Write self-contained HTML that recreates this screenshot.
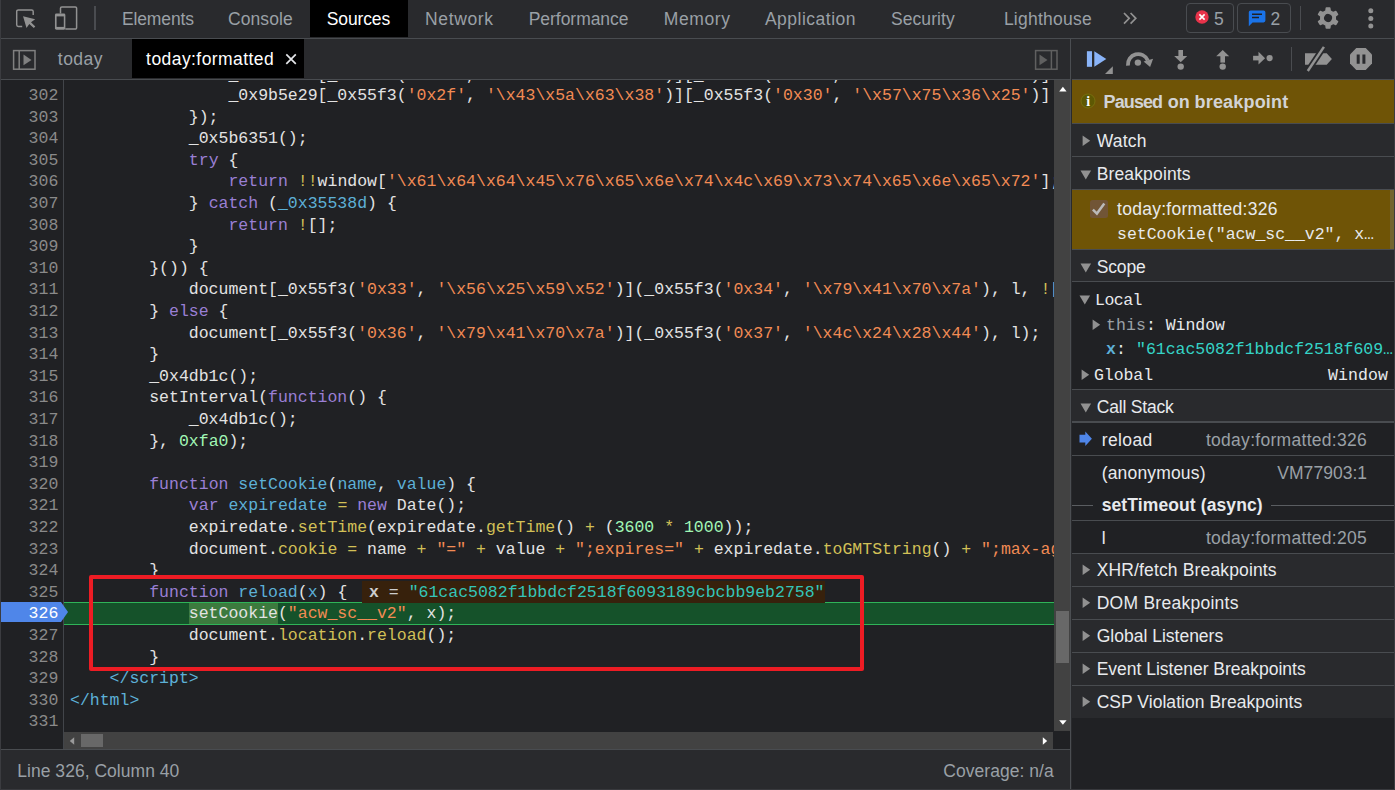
<!DOCTYPE html>
<html>
<head>
<meta charset="utf-8">
<title>DevTools - Sources</title>
<style>
*{box-sizing:border-box;margin:0;padding:0}
html,body{width:1395px;height:790px;overflow:hidden;background:#202124}
body{position:relative;font-family:"Liberation Sans",sans-serif;font-size:17.5px;color:#9aa0a6}
.abs{position:absolute;display:block}
.t{position:absolute;white-space:pre;line-height:22px;height:22px}
.ln{position:absolute;left:0;width:58.3px;text-align:right;font-family:"Liberation Mono",monospace;font-size:16.5px;line-height:21.6px;height:21.6px;color:#8a8a8a;white-space:pre;margin-top:0.8px}
.cl{position:absolute;left:6px;margin-top:0.8px;white-space:pre;font-family:"Liberation Mono",monospace;font-size:16.5px;line-height:21.6px;height:21.6px;color:#e3e3e3}
.k{color:#9a7fd5}.d{color:#5db0d7}.s{color:#f28b54}.n{color:#a1f7b5}.p{color:#d2c057}.g{color:#5db0d7}
</style>
</head>
<body>
<div class="abs" style="left:0px;top:0px;width:1395px;height:38px;background:#292a2d;"></div>
<div class="abs" style="left:0px;top:38px;width:1395px;height:1px;background:#494c50;"></div>
<div class="abs" style="left:310px;top:0px;width:98px;height:37px;background:#000;"></div>
<div class="t" style="left:121.90px;top:7.54px;font-size:17.50px;letter-spacing:-0.106px;color:#9aa0a6;font-weight:400;font-family:'Liberation Sans',sans-serif;">Elements</div>
<div class="t" style="left:228.00px;top:7.54px;font-size:17.50px;letter-spacing:0.070px;color:#9aa0a6;font-weight:400;font-family:'Liberation Sans',sans-serif;">Console</div>
<div class="t" style="left:326.80px;top:7.54px;font-size:17.50px;letter-spacing:-0.143px;color:#ffffff;font-weight:400;font-family:'Liberation Sans',sans-serif;">Sources</div>
<div class="t" style="left:425.10px;top:7.54px;font-size:17.50px;letter-spacing:0.603px;color:#9aa0a6;font-weight:400;font-family:'Liberation Sans',sans-serif;">Network</div>
<div class="t" style="left:528.70px;top:7.54px;font-size:17.50px;letter-spacing:-0.035px;color:#9aa0a6;font-weight:400;font-family:'Liberation Sans',sans-serif;">Performance</div>
<div class="t" style="left:663.70px;top:7.54px;font-size:17.50px;letter-spacing:0.617px;color:#9aa0a6;font-weight:400;font-family:'Liberation Sans',sans-serif;">Memory</div>
<div class="t" style="left:764.90px;top:7.54px;font-size:17.50px;letter-spacing:0.508px;color:#9aa0a6;font-weight:400;font-family:'Liberation Sans',sans-serif;">Application</div>
<div class="t" style="left:891.00px;top:7.54px;font-size:17.50px;letter-spacing:0.061px;color:#9aa0a6;font-weight:400;font-family:'Liberation Sans',sans-serif;">Security</div>
<div class="t" style="left:1003.90px;top:7.54px;font-size:17.50px;letter-spacing:0.237px;color:#9aa0a6;font-weight:400;font-family:'Liberation Sans',sans-serif;">Lighthouse</div>
<svg class="abs" style="left:14px;top:6px" width="26" height="26" viewBox="0 0 26 26"><path d="M8.2 20.4H4.3a1.6 1.6 0 0 1-1.6-1.6V5.5a1.6 1.6 0 0 1 1.6-1.6h13.3a1.6 1.6 0 0 1 1.6 1.6V9" fill="none" stroke="#929292" stroke-width="1.45"/><path d="M9.05 10.35L21.2 13.3 17 16.2l4.3 4.2-1.5 1.7-4.5-4-2.8 4z" fill="#929292"/></svg>
<svg class="abs" style="left:53px;top:5px" width="26" height="28" viewBox="0 0 26 28"><path d="M7.5 8.6V3.2a1.3 1.3 0 0 1 1.3-1.3h13.5a1.3 1.3 0 0 1 1.3 1.3v19.5a1.3 1.3 0 0 1-1.3 1.3H12.3" fill="none" stroke="#929292" stroke-width="1.5"/><rect x="1.95" y="8.6" width="10.4" height="16.15" rx="1.4" fill="#929292"/><rect x="3.6" y="11.4" width="7.2" height="10.5" fill="#292a2d"/></svg>
<div class="abs" style="left:94.2px;top:6px;width:1.8px;height:24px;background:#4a4c50;"></div>
<svg class="abs" style="left:1121px;top:10px" width="18" height="16" viewBox="0 0 18 16"><path d="M3 3l5.2 5.3L3 13.6M9.6 3l5.2 5.3-5.2 5.3" fill="none" stroke="#929292" stroke-width="1.7"/></svg>
<div class="abs" style="left:1186px;top:3px;width:48px;height:30px;background:transparent;border:1px solid #494c50;border-radius:4px"></div>
<svg class="abs" style="left:1195px;top:10.4px" width="14" height="14" viewBox="0 0 14 14"><circle cx="7" cy="7" r="6.7" fill="#e8334a"/><path d="M4.4 4.4l5.2 5.2M9.6 4.4l-5.2 5.2" stroke="#fff" stroke-width="1.6"/></svg>
<div class="t" style="left:1214.10px;top:7.54px;font-size:17.50px;letter-spacing:0.467px;color:#9aa0a6;font-weight:400;font-family:'Liberation Sans',sans-serif;">5</div>
<div class="abs" style="left:1237px;top:3px;width:54px;height:30px;background:transparent;border:1px solid #494c50;border-radius:4px"></div>
<svg class="abs" style="left:1248px;top:10px" width="18" height="17" viewBox="0 0 18 17"><path d="M2.6 0.4h13a1.8 1.8 0 0 1 1.8 1.8v8.4a1.8 1.8 0 0 1-1.8 1.8H4.6L0.8 16.2V2.2A1.8 1.8 0 0 1 2.6 0.4z" fill="#1a73e8"/><path d="M4 4.2h10M4 7.6h7" stroke="#202124" stroke-width="1.5"/></svg>
<div class="t" style="left:1270.60px;top:7.54px;font-size:17.50px;letter-spacing:-0.133px;color:#9aa0a6;font-weight:400;font-family:'Liberation Sans',sans-serif;">2</div>
<div class="abs" style="left:1300px;top:6px;width:1px;height:24px;background:#4a4c50;"></div>
<svg class="abs" style="left:1316px;top:5.8px" width="24" height="24" viewBox="0 0 24 24"><g transform="translate(12.05,12) rotate(30)"><path fill="#929292" fill-rule="evenodd" stroke="#929292" stroke-width="1.6" stroke-linejoin="round" d="M7.11 -2.06 L9.96 -1.68 L9.96 1.68 L7.11 2.06 L5.34 5.12 L6.44 7.78 L3.52 9.47 L1.77 7.19 L-1.77 7.19 L-3.52 9.47 L-6.44 7.78 L-5.34 5.12 L-7.11 2.06 L-9.96 1.68 L-9.96 -1.68 L-7.11 -2.06 L-5.34 -5.12 L-6.44 -7.78 L-3.52 -9.47 L-1.77 -7.19 L1.77 -7.19 L3.52 -9.47 L6.44 -7.78 L5.34 -5.12Z M4.80 0 A4.80 4.80 0 1 0 -4.80 0 A4.80 4.80 0 1 0 4.80 0Z"/></g></svg>
<svg class="abs" style="left:1366px;top:6.3px" width="10" height="24" viewBox="0 0 10 24"><circle cx="4.8" cy="4.8" r="2.5" fill="#929292"/><circle cx="4.8" cy="12.4" r="2.5" fill="#929292"/><circle cx="4.8" cy="20.1" r="2.5" fill="#929292"/></svg>
<div class="abs" style="left:0px;top:39px;width:1070px;height:40px;background:#292a2d;"></div>
<div class="abs" style="left:1071px;top:39px;width:324px;height:40px;background:#292a2d;"></div>
<div class="abs" style="left:0px;top:79px;width:1395px;height:1px;background:#494c50;"></div>
<div class="abs" style="left:132px;top:39px;width:172px;height:39px;background:#000;"></div>
<svg class="abs" style="left:12px;top:49px" width="25" height="22" viewBox="0 0 25 22"><rect x="1.6" y="1.6" width="21.4" height="18.6" fill="none" stroke="#808080" stroke-width="1.5"/><path d="M7.2 1.6v18.6" stroke="#808080" stroke-width="1.5"/><path d="M11.5 5.6l8 5.3-8 5.3z" fill="#808080"/></svg>
<div class="t" style="left:57.80px;top:48.34px;font-size:17.50px;letter-spacing:0.478px;color:#9aa0a6;font-weight:400;font-family:'Liberation Sans',sans-serif;">today</div>
<div class="t" style="left:146.10px;top:48.34px;font-size:17.50px;letter-spacing:0.434px;color:#ffffff;font-weight:400;font-family:'Liberation Sans',sans-serif;">today:formatted</div>
<svg class="abs" style="left:285px;top:53px" width="12" height="12" viewBox="0 0 12 12"><path d="M1.3 1.3l9.5 9.5M10.8 1.3l-9.5 9.5" stroke="#e4e6e9" stroke-width="1.7"/></svg>
<svg class="abs" style="left:1034px;top:49px" width="25" height="22" viewBox="0 0 25 22"><rect x="1.6" y="1.6" width="21.4" height="18.6" fill="none" stroke="#606060" stroke-width="1.5"/><path d="M17.4 1.6v18.6" stroke="#606060" stroke-width="1.5"/><path d="M5.5 5.6l8 5.3-8 5.3z" fill="#606060"/></svg>
<svg class="abs" style="left:1084px;top:46px" width="32" height="30" viewBox="0 0 32 30"><rect x="2.9" y="5.2" width="5.1" height="15.6" fill="#8ab4f8"/><path d="M10.3 5.2l12 7.8-12 7.8z" fill="#8ab4f8"/><path d="M28.8 20.3v7.7h-7.8z" fill="#929292"/></svg>
<svg class="abs" style="left:1124px;top:48px" width="32" height="24" viewBox="0 0 32 24"><path d="M3.9 17.6a10.4 10.4 0 0 1 19.9 -5.2" fill="none" stroke="#929292" stroke-width="3.8"/><path d="M19.6 13.6l9.5-2.9-3 8.3z" fill="#929292"/><circle cx="13.9" cy="14.6" r="3.2" fill="#929292"/></svg>
<svg class="abs" style="left:1170px;top:46px" width="22" height="26" viewBox="0 0 22 26"><rect x="8.4" y="4" width="4.6" height="7" fill="#929292"/><path d="M4.2 10h13l-6.5 6.3z" fill="#929292"/><circle cx="10.7" cy="20.6" r="3.2" fill="#929292"/></svg>
<svg class="abs" style="left:1212px;top:46px" width="22" height="26" viewBox="0 0 22 26"><rect x="8.4" y="10" width="4.6" height="6.6" fill="#929292"/><path d="M4.2 10.2h13l-6.5-6.2z" fill="#929292"/><circle cx="10.7" cy="20.6" r="3.2" fill="#929292"/></svg>
<svg class="abs" style="left:1250px;top:48px" width="26" height="22" viewBox="0 0 26 22"><rect x="3.1" y="7.8" width="6.6" height="4.6" fill="#929292"/><path d="M8.5 3.8v12.8l6.6-6.4z" fill="#929292"/><circle cx="19.6" cy="10.1" r="3.1" fill="#929292"/></svg>
<div class="abs" style="left:1291px;top:47px;width:1px;height:24px;background:#4a4c50;"></div>
<svg class="abs" style="left:1302px;top:45px" width="32" height="28" viewBox="0 0 32 28"><path d="M3 8.2h21.7l5.2 5.7-5.2 5.8H3z" fill="#929292"/><path d="M22.6 0.8L5.2 27" stroke="#292a2d" stroke-width="6"/><path d="M21.9 1.9L5.8 26" stroke="#929292" stroke-width="2.5"/></svg>
<svg class="abs" style="left:1349px;top:47px" width="24" height="24" viewBox="0 0 24 24"><path d="M7.3 1h9.4l6.3 6.4v9.2l-6.3 6.4H7.3L1 16.6V7.4z" fill="#929292"/><path d="M9.2 7.4v9.4M14.9 7.4v9.4" stroke="#292a2d" stroke-width="3"/></svg>
<div class="abs" style="left:1070px;top:39px;width:1px;height:751px;background:#4b4e52;"></div>
<div class="abs" style="left:1071px;top:39px;width:1px;height:751px;background:#292a2d;"></div>
<div class="abs" style="left:0;top:80px;width:63px;height:669px;background:#202124"></div>
<div class="abs" style="left:63px;top:80px;width:1px;height:669px;background:#42454a;"></div>
<div class="abs" id="code" style="left:64px;top:80px;width:990px;height:652px;overflow:hidden;background:#202124">
<div class="abs" style="left:0;top:522.00px;width:990px;height:23px;background:#15522a;border-top:1px solid #2fb458;border-bottom:1px solid #2fb458"></div>
<div class="abs" style="left:124.80px;top:523.00px;width:89.10px;height:21.00px;background:#3c7a3e"></div>
<div class="abs" style="left:298.00px;top:501.00px;width:463.00px;height:22.00px;background:#37210c"></div>
<div class="cl" style="top:-15.80px">                _0x9b5e29[_0x55f3(<span class="s">'0x2d'</span>, <span class="s">'\x6a\x5d\x5b\x28'</span>)][_0x55f3(<span class="s">'0x2e'</span>, <span class="s">'\x5b\x4a\x79\x28'</span>)] </div>
<div class="cl" style="top:4.20px">                _0x9b5e29[_0x55f3(<span class="s">'0x2f'</span>, <span class="s">'\x43\x5a\x63\x38'</span>)][_0x55f3(<span class="s">'0x30'</span>, <span class="s">'\x57\x75\x36\x25'</span>)] <span class="p">= </span>_0x9b5e29</div>
<div class="cl" style="top:25.80px">            });</div>
<div class="cl" style="top:47.40px">            _0x5b6351();</div>
<div class="cl" style="top:69.00px">            <span class="k">try</span> {</div>
<div class="cl" style="top:90.60px">                <span class="k">return</span> <span class="p">!!</span>window[<span class="s">'\x61\x64\x64\x45\x76\x65\x6e\x74\x4c\x69\x73\x74\x65\x6e\x65\x72'</span>];</div>
<div class="cl" style="top:112.20px">            } <span class="k">catch</span> (<span class="d">_0x35538d</span>) {</div>
<div class="cl" style="top:133.80px">                <span class="k">return</span> <span class="p">!</span>[];</div>
<div class="cl" style="top:155.40px">            }</div>
<div class="cl" style="top:177.00px">        }()) {</div>
<div class="cl" style="top:198.60px">            document[_0x55f3(<span class="s">'0x33'</span>, <span class="s">'\x56\x25\x59\x52'</span>)](_0x55f3(<span class="s">'0x34'</span>, <span class="s">'\x79\x41\x70\x7a'</span>), l, <span class="p">!</span>[]);</div>
<div class="cl" style="top:220.20px">        } <span class="k">else</span> {</div>
<div class="cl" style="top:241.80px">            document[_0x55f3(<span class="s">'0x36'</span>, <span class="s">'\x79\x41\x70\x7a'</span>)](_0x55f3(<span class="s">'0x37'</span>, <span class="s">'\x4c\x24\x28\x44'</span>), l);</div>
<div class="cl" style="top:263.40px">        }</div>
<div class="cl" style="top:285.00px">        _0x4db1c();</div>
<div class="cl" style="top:306.60px">        setInterval(<span class="k">function</span>() {</div>
<div class="cl" style="top:328.20px">            _0x4db1c();</div>
<div class="cl" style="top:349.80px">        }, <span class="n">0xfa0</span>);</div>
<div class="cl" style="top:371.40px"></div>
<div class="cl" style="top:393.00px">        <span class="k">function</span> <span class="d">setCookie</span>(<span class="d">name</span>, <span class="d">value</span>) {</div>
<div class="cl" style="top:414.60px">            <span class="k">var</span> <span class="d">expiredate</span> <span class="p">=</span> <span class="k">new</span> Date();</div>
<div class="cl" style="top:436.20px">            expiredate.<span class="p">setTime</span>(expiredate.<span class="p">getTime</span>() <span class="p">+</span> (<span class="n">3600</span> <span class="p">*</span> <span class="n">1000</span>));</div>
<div class="cl" style="top:457.80px">            document.<span class="p">cookie</span> <span class="p">=</span> name <span class="p">+</span> <span class="s">"="</span> <span class="p">+</span> value <span class="p">+</span> <span class="s">";expires="</span> <span class="p">+</span> expiredate.<span class="p">toGMTString</span>() <span class="p">+</span> <span class="s">";max-age=3600;path=/"</span>;</div>
<div class="cl" style="top:479.40px">        }</div>
<div class="cl" style="top:501.00px">        <span class="k">function</span> <span class="d">reload</span>(<span class="d">x</span>) {</div>
<div class="cl" style="top:522.60px">            setCookie(<span class="s">"acw_sc__v2"</span>, x);</div>
<div class="cl" style="top:544.20px">            document.<span class="p">location</span>.<span class="p">reload</span>();</div>
<div class="cl" style="top:565.80px">        }</div>
<div class="cl" style="top:587.40px"><span class="g">    &lt;/script&gt;</span></div>
<div class="cl" style="top:609.00px"><span class="g">&lt;/html&gt;</span></div>
<div class="cl" style="top:630.60px"></div>
<div class="cl" style="top:501.00px;left:305.00px"><span style="color:#cdcdcd"><b>x</b> = </span><span style="color:#34c5b9">"61cac5082f1bbdcf2518f6093189cbcbb9eb2758"</span></div>
</div>
<div class="abs" style="left:0;top:80px;width:70px;height:669px;overflow:hidden">
<svg class="abs" style="left:0;top:522.20px" width="70" height="20" viewBox="0 0 70 20"><path d="M1 0h60l7 10-7 10H1z" fill="#4f86e9"/></svg>
<div class="ln" style="top:-17.40px">301</div>
<div class="ln" style="top:4.20px">302</div>
<div class="ln" style="top:25.80px">303</div>
<div class="ln" style="top:47.40px">304</div>
<div class="ln" style="top:69.00px">305</div>
<div class="ln" style="top:90.60px">306</div>
<div class="ln" style="top:112.20px">307</div>
<div class="ln" style="top:133.80px">308</div>
<div class="ln" style="top:155.40px">309</div>
<div class="ln" style="top:177.00px">310</div>
<div class="ln" style="top:198.60px">311</div>
<div class="ln" style="top:220.20px">312</div>
<div class="ln" style="top:241.80px">313</div>
<div class="ln" style="top:263.40px">314</div>
<div class="ln" style="top:285.00px">315</div>
<div class="ln" style="top:306.60px">316</div>
<div class="ln" style="top:328.20px">317</div>
<div class="ln" style="top:349.80px">318</div>
<div class="ln" style="top:371.40px">319</div>
<div class="ln" style="top:393.00px">320</div>
<div class="ln" style="top:414.60px">321</div>
<div class="ln" style="top:436.20px">322</div>
<div class="ln" style="top:457.80px">323</div>
<div class="ln" style="top:479.40px">324</div>
<div class="ln" style="top:501.00px">325</div>
<div class="ln" style="top:522.60px;color:#fff">326</div>
<div class="ln" style="top:544.20px">327</div>
<div class="ln" style="top:565.80px">328</div>
<div class="ln" style="top:587.40px">329</div>
<div class="ln" style="top:609.00px">330</div>
<div class="ln" style="top:630.60px">331</div>
</div>
<div class="abs" style="left:89px;top:575px;width:775.3px;height:96.4px;border:4.2px solid #ed1c24;border-radius:2px"></div>
<div class="abs" style="left:1054px;top:80px;width:16px;height:651px;background:#424242;"></div>
<div class="abs" style="left:1056px;top:611px;width:13px;height:52px;background:#686868;"></div>
<svg class="abs" style="left:1057.6px;top:85.8px" width="10" height="8" viewBox="0 0 10 8"><path d="M1.2 5.4l3.7-4.6 3.7 4.6z" fill="#fff"/></svg>
<svg class="abs" style="left:1057.6px;top:718.8px" width="10" height="8" viewBox="0 0 10 8"><path d="M1.2 1.2l3.7 4.6 3.7-4.6z" fill="#fff"/></svg>
<div class="abs" style="left:64px;top:732px;width:989px;height:17px;background:#424242;"></div>
<div class="abs" style="left:1053px;top:731px;width:17px;height:18px;background:#202124;"></div>
<div class="abs" style="left:81px;top:734px;width:22px;height:13px;background:#686868;"></div>
<svg class="abs" style="left:68px;top:735.5px" width="8" height="10" viewBox="0 0 8 10"><path d="M6.2 1.2l-4.4 3.8 4.4 3.8z" fill="#9a9a9a"/></svg>
<svg class="abs" style="left:1041px;top:735.5px" width="8" height="10" viewBox="0 0 8 10"><path d="M1.8 1.2l4.4 3.8-4.4 3.8z" fill="#fff"/></svg>
<div class="abs" style="left:0px;top:732px;width:63px;height:17px;background:#202124;"></div>
<div class="abs" style="left:0px;top:749px;width:1070px;height:1px;background:#494c50;"></div>
<div class="abs" style="left:0px;top:750px;width:1070px;height:40px;background:#292a2d;"></div>
<div class="t" style="left:17.30px;top:759.54px;font-size:17.50px;letter-spacing:0.026px;color:#9aa0a6;font-weight:400;font-family:'Liberation Sans',sans-serif;">Line 326, Column 40</div>
<div class="t" style="left:943.30px;top:759.54px;font-size:17.50px;letter-spacing:0.036px;color:#9aa0a6;font-weight:400;font-family:'Liberation Sans',sans-serif;">Coverage: n/a</div>
<div class="abs" style="left:1072px;top:80px;width:323px;height:710px;background:#202124;"></div>
<div class="abs" style="left:1072px;top:80px;width:323px;height:43px;background:#6f5406;"></div>
<div class="abs" style="left:1072px;top:123px;width:323px;height:1px;background:#494c50;"></div>
<svg class="abs" style="left:1080.2px;top:93.1px" width="16" height="16" viewBox="0 0 16 16"><circle cx="8" cy="8" r="7" fill="#5e5803" stroke="#787010" stroke-width="0.9"/><text x="8.1" y="13" font-family="Liberation Serif,serif" font-weight="700" font-size="14" fill="#fff" text-anchor="middle">i</text></svg>
<div class="t" style="left:1103.58px;top:91.16px;font-size:18.00px;letter-spacing:-0.898px;color:#d2d3d5;font-weight:700;font-family:'Liberation Sans',sans-serif;">Paused</div>
<div class="t" style="left:1167.68px;top:91.16px;font-size:18.00px;letter-spacing:0.025px;color:#d2d3d5;font-weight:700;font-family:'Liberation Sans',sans-serif;">on</div>
<div class="t" style="left:1194.58px;top:91.16px;font-size:18.00px;letter-spacing:0.173px;color:#d2d3d5;font-weight:700;font-family:'Liberation Sans',sans-serif;">breakpoint</div>
<div class="abs" style="left:1072px;top:124px;width:323px;height:32px;background:#292a2d;"></div>
<div class="abs" style="left:1072px;top:156px;width:323px;height:1px;background:#494c50;"></div>
<svg class="abs" style="left:1082px;top:135.1px" width="9" height="12" viewBox="0 0 9 12"><path d="M0.6 0.6l7.6 5.2-7.6 5.2z" fill="#919191"/></svg>
<div class="t" style="left:1096.70px;top:129.94px;font-size:17.50px;letter-spacing:0.211px;color:#e8eaed;font-weight:400;font-family:'Liberation Sans',sans-serif;">Watch</div>
<div class="abs" style="left:1072px;top:157px;width:323px;height:31.5px;background:#292a2d;"></div>
<div class="abs" style="left:1072px;top:188.5px;width:323px;height:1.2px;background:#494c50;"></div>
<svg class="abs" style="left:1079.9px;top:169.8px" width="12" height="10" viewBox="0 0 12 10"><path d="M0.5 0.5h10.6l-5.3 9z" fill="#919191"/></svg>
<div class="t" style="left:1096.70px;top:162.74px;font-size:17.50px;letter-spacing:0.144px;color:#e8eaed;font-weight:400;font-family:'Liberation Sans',sans-serif;">Breakpoints</div>
<div class="abs" style="left:1072px;top:189.7px;width:323px;height:59.3px;background:#6f5406;"></div>
<div class="abs" style="left:1390px;top:189.7px;width:4px;height:59.3px;background:#73652f;"></div>
<div class="abs" style="left:1090px;top:200px;width:18px;height:18px;background:#715536;border-radius:2.5px"></div>
<svg class="abs" style="left:1090px;top:200px" width="18" height="18" viewBox="0 0 18 18"><path d="M2.9 9.6l4 4 7.4-10.1" fill="none" stroke="#bababa" stroke-width="2.5"/></svg>
<div class="t" style="left:1117.10px;top:198.34px;font-size:17.50px;letter-spacing:0.260px;color:#e8eaed;font-weight:400;font-family:'Liberation Sans',sans-serif;">today:formatted:326</div>
<div class="t" style="left:1117.00px;top:223.60px;font-size:16.50px;letter-spacing:-0.017px;color:#e8eaed;font-weight:400;font-family:'Liberation Mono',monospace;">setCookie(&quot;acw_sc__v2&quot;, x…</div>
<div class="abs" style="left:1072px;top:249px;width:323px;height:1px;background:#494c50;"></div>
<div class="abs" style="left:1072px;top:250px;width:323px;height:31px;background:#292a2d;"></div>
<div class="abs" style="left:1072px;top:281px;width:323px;height:1px;background:#494c50;"></div>
<svg class="abs" style="left:1079.9px;top:262.8px" width="12" height="10" viewBox="0 0 12 10"><path d="M0.5 0.5h10.6l-5.3 9z" fill="#919191"/></svg>
<div class="t" style="left:1096.70px;top:255.74px;font-size:17.50px;letter-spacing:-0.124px;color:#e8eaed;font-weight:400;font-family:'Liberation Sans',sans-serif;">Scope</div>
<svg class="abs" style="left:1078.5px;top:295px" width="12" height="10" viewBox="0 0 12 10"><path d="M0.5 0.5h10.6l-5.3 9z" fill="#919191"/></svg>
<div class="t" style="left:1095.00px;top:289.80px;font-size:16.50px;letter-spacing:-0.502px;color:#e8eaed;font-weight:400;font-family:'Liberation Mono',monospace;">Local</div>
<svg class="abs" style="left:1092.3px;top:319px" width="9" height="12" viewBox="0 0 9 12"><path d="M0.6 0.6l7.6 5.2-7.6 5.2z" fill="#919191"/></svg>
<div class="t" style="left:1106.00px;top:315.10px;font-size:16.50px;letter-spacing:0.098px;color:#9aa0a6;font-weight:400;font-family:'Liberation Mono',monospace;">this</div>
<div class="t" style="left:1146.00px;top:315.10px;font-size:16.50px;letter-spacing:-0.027px;color:#e8eaed;font-weight:400;font-family:'Liberation Mono',monospace;">: Window</div>
<div class="t" style="left:1106.00px;top:339.10px;font-size:16.50px;letter-spacing:0.098px;color:#5db0d7;font-weight:700;font-family:'Liberation Mono',monospace;">x</div>
<div class="t" style="left:1116.00px;top:339.10px;font-size:16.50px;letter-spacing:0.098px;color:#e8eaed;font-weight:400;font-family:'Liberation Mono',monospace;">:</div>
<div class="t" style="left:1136.00px;top:339.10px;font-size:16.50px;letter-spacing:-0.017px;color:#35d4c7;font-weight:400;font-family:'Liberation Mono',monospace;">&quot;61cac5082f1bbdcf2518f609…</div>
<svg class="abs" style="left:1080.5px;top:369.3px" width="9" height="12" viewBox="0 0 9 12"><path d="M0.6 0.6l7.6 5.2-7.6 5.2z" fill="#919191"/></svg>
<div class="t" style="left:1094.00px;top:364.60px;font-size:16.50px;letter-spacing:-0.068px;color:#e8eaed;font-weight:400;font-family:'Liberation Mono',monospace;">Global</div>
<div class="t" style="left:1328.00px;top:364.60px;font-size:16.50px;letter-spacing:0.098px;color:#e8eaed;font-weight:400;font-family:'Liberation Mono',monospace;">Window</div>
<div class="abs" style="left:1072px;top:389px;width:323px;height:1px;background:#494c50;"></div>
<div class="abs" style="left:1072px;top:390px;width:323px;height:31px;background:#292a2d;"></div>
<div class="abs" style="left:1072px;top:421px;width:323px;height:2px;background:#494c50;"></div>
<svg class="abs" style="left:1079.9px;top:402.8px" width="12" height="10" viewBox="0 0 12 10"><path d="M0.5 0.5h10.6l-5.3 9z" fill="#919191"/></svg>
<div class="t" style="left:1096.70px;top:395.74px;font-size:17.50px;letter-spacing:-0.178px;color:#e8eaed;font-weight:400;font-family:'Liberation Sans',sans-serif;">Call Stack</div>
<div class="abs" style="left:1072px;top:455px;width:323px;height:1px;background:#494c50;"></div>
<svg class="abs" style="left:1079px;top:431px" width="14" height="16" viewBox="0 0 14 16"><path d="M0.5 3.8h5.8V0.4l6.6 7.3-6.6 7.3v-3.4H0.5z" fill="#4f86e9"/></svg>
<div class="t" style="left:1101.70px;top:428.94px;font-size:17.50px;letter-spacing:0.392px;color:#e8eaed;font-weight:400;font-family:'Liberation Sans',sans-serif;">reload</div>
<div class="t" style="left:1205.90px;top:428.94px;font-size:17.50px;letter-spacing:0.292px;color:#9aa0a6;font-weight:400;font-family:'Liberation Sans',sans-serif;">today:formatted:326</div>
<div class="t" style="left:1101.70px;top:461.94px;font-size:17.50px;letter-spacing:0.170px;color:#e8eaed;font-weight:400;font-family:'Liberation Sans',sans-serif;">(anonymous)</div>
<div class="t" style="left:1277.30px;top:461.94px;font-size:17.50px;letter-spacing:0.032px;color:#9aa0a6;font-weight:400;font-family:'Liberation Sans',sans-serif;">VM77903:1</div>
<div class="abs" style="left:1072px;top:505px;width:21px;height:1px;background:#5a5d61;"></div>
<div class="abs" style="left:1271px;top:505px;width:124px;height:1px;background:#5a5d61;"></div>
<div class="t" style="left:1101.70px;top:493.94px;font-size:17.50px;letter-spacing:0.102px;color:#e8eaed;font-weight:700;font-family:'Liberation Sans',sans-serif;">setTimeout (async)</div>
<div class="abs" style="left:1072px;top:520px;width:323px;height:1px;background:#494c50;"></div>
<div class="t" style="left:1101.70px;top:526.94px;font-size:17.50px;letter-spacing:0.112px;color:#e8eaed;font-weight:400;font-family:'Liberation Sans',sans-serif;">l</div>
<div class="t" style="left:1205.90px;top:526.94px;font-size:17.50px;letter-spacing:0.292px;color:#9aa0a6;font-weight:400;font-family:'Liberation Sans',sans-serif;">today:formatted:205</div>
<div class="abs" style="left:1072px;top:553px;width:323px;height:1px;background:#494c50;"></div>
<div class="abs" style="left:1072px;top:554px;width:323px;height:32px;background:#292a2d;"></div>
<div class="abs" style="left:1072px;top:586px;width:323px;height:1px;background:#494c50;"></div>
<svg class="abs" style="left:1082px;top:564.3px" width="9" height="12" viewBox="0 0 9 12"><path d="M0.6 0.6l7.6 5.2-7.6 5.2z" fill="#919191"/></svg>
<div class="t" style="left:1096.70px;top:559.14px;font-size:17.50px;letter-spacing:0.142px;color:#e8eaed;font-weight:400;font-family:'Liberation Sans',sans-serif;">XHR/fetch Breakpoints</div>
<div class="abs" style="left:1072px;top:587px;width:323px;height:32px;background:#292a2d;"></div>
<div class="abs" style="left:1072px;top:619px;width:323px;height:1px;background:#494c50;"></div>
<svg class="abs" style="left:1082px;top:597.3px" width="9" height="12" viewBox="0 0 9 12"><path d="M0.6 0.6l7.6 5.2-7.6 5.2z" fill="#919191"/></svg>
<div class="t" style="left:1096.70px;top:592.14px;font-size:17.50px;letter-spacing:0.260px;color:#e8eaed;font-weight:400;font-family:'Liberation Sans',sans-serif;">DOM Breakpoints</div>
<div class="abs" style="left:1072px;top:620px;width:323px;height:32px;background:#292a2d;"></div>
<div class="abs" style="left:1072px;top:652px;width:323px;height:1px;background:#494c50;"></div>
<svg class="abs" style="left:1082px;top:630.3px" width="9" height="12" viewBox="0 0 9 12"><path d="M0.6 0.6l7.6 5.2-7.6 5.2z" fill="#919191"/></svg>
<div class="t" style="left:1096.70px;top:625.14px;font-size:17.50px;letter-spacing:0.003px;color:#e8eaed;font-weight:400;font-family:'Liberation Sans',sans-serif;">Global Listeners</div>
<div class="abs" style="left:1072px;top:653px;width:323px;height:32px;background:#292a2d;"></div>
<div class="abs" style="left:1072px;top:685px;width:323px;height:1px;background:#494c50;"></div>
<svg class="abs" style="left:1082px;top:663.3px" width="9" height="12" viewBox="0 0 9 12"><path d="M0.6 0.6l7.6 5.2-7.6 5.2z" fill="#919191"/></svg>
<div class="t" style="left:1096.70px;top:658.14px;font-size:17.50px;letter-spacing:-0.006px;color:#e8eaed;font-weight:400;font-family:'Liberation Sans',sans-serif;">Event Listener Breakpoints</div>
<div class="abs" style="left:1072px;top:686px;width:323px;height:32px;background:#292a2d;"></div>
<div class="abs" style="left:1072px;top:718px;width:323px;height:0px;background:#494c50;"></div>
<svg class="abs" style="left:1082px;top:696.3px" width="9" height="12" viewBox="0 0 9 12"><path d="M0.6 0.6l7.6 5.2-7.6 5.2z" fill="#919191"/></svg>
<div class="t" style="left:1096.70px;top:691.14px;font-size:17.50px;letter-spacing:0.035px;color:#e8eaed;font-weight:400;font-family:'Liberation Sans',sans-serif;">CSP Violation Breakpoints</div>
<div class="abs" style="left:0px;top:0px;width:1px;height:790px;background:#3b3c40;"></div>
<div class="abs" style="left:1394px;top:0px;width:1px;height:790px;background:#3b3c40;"></div>
<div class="abs" style="left:0px;top:789px;width:1395px;height:1px;background:#38393d;"></div>
</body>
</html>
